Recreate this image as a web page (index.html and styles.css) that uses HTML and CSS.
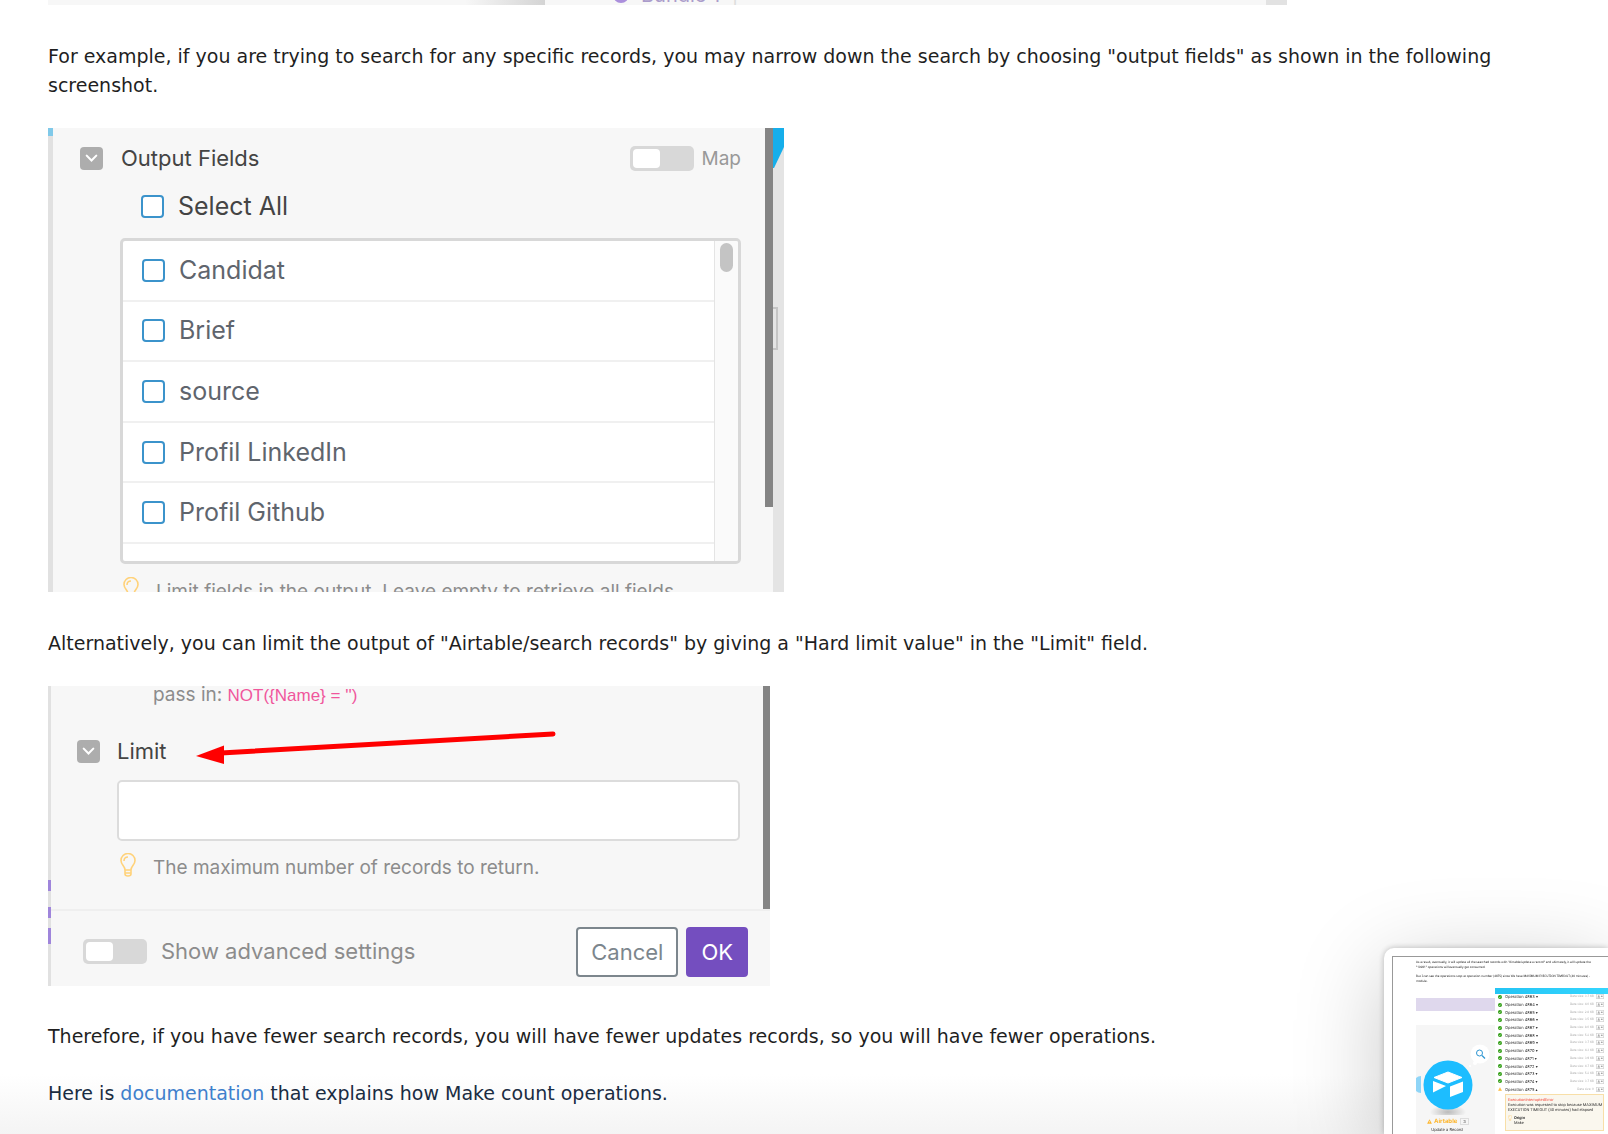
FILE: index.html
```
<!DOCTYPE html>
<html lang="en">
<head>
  <meta charset="UTF-8">
  <meta name="viewport" content="width=device-width, initial-scale=1.0">
  <title>Limiting operations</title>
  <link rel="stylesheet" href="styles.css">
</head>
<body>
  <svg class="defs" width="0" height="0" aria-hidden="true">
    <symbol id="bulb" viewBox="0 0 16 24"><path d="M5 17c0-4-4-5-4-9.500a7 7 0 0 1 14 0C15 12 11 13 11 17zM5 17v4q0 2 3 2t3-2v-4M5 20h6M4 8q0-4 4-4" fill="none" stroke="#ffd27a" stroke-width="1.600"/></symbol>
    <symbol id="chevron" viewBox="0 0 24 24"><path d="M7 9l5 5 5-5" fill="none" stroke="#fff" stroke-width="2.200" stroke-linecap="round"/></symbol>
    <symbol id="ok" viewBox="0 0 8 8"><circle cx="4" cy="4" r="4" fill="#2f9e12"/><path d="M2.200 4l1.300 1.400 2.300-2.600" fill="none" stroke="#fff" stroke-width="1.200"/></symbol>
    <symbol id="warn" viewBox="0 0 8 8"><path d="M4 .5l3.800 7H.2z" fill="#fdb62f"/><path d="M4 3v2.200M4 5.800v.8" stroke="#fff" stroke-width=".8"/></symbol>
    <symbol id="save" viewBox="0 0 16 10"><rect x=".5" y=".5" width="15" height="9" rx="1.500" fill="#fff" stroke="#aaa"/><path d="M3 7.500h5M5.500 2v4M4 4.500L5.500 6 7 4.500M10 4h3l-1.500 2z" fill="none" stroke="#777"/></symbol>
  </svg>

  <main>
    <div class="strip">
      <div class="strip-left"></div>
      <div class="strip-main"><span class="strip-dot"></span><span class="strip-text">Bundle 1: <i>|</i></span></div>
      <div class="strip-right"></div>
    </div>

    <p>For example, if you are trying to search for any specific records, you may narrow down the search by choosing "output fields" as shown in the following screenshot.</p>

    <figure class="shot shot-fields">
      <div class="edge"></div>
      <div class="panel">
        <div class="panel-head">
          <button class="chevron" aria-label="Collapse output fields"><svg><use href="#chevron"/></svg></button>
          <span class="title">Output Fields</span>
          <label class="map"><input type="checkbox" class="toggle"> Map</label>
        </div>
        <label class="check select-all"><input type="checkbox"> Select All</label>
        <div class="list">
          <div class="rows">
            <label class="check"><input type="checkbox"> Candidat</label>
            <label class="check"><input type="checkbox"> Brief</label>
            <label class="check"><input type="checkbox"> source</label>
            <label class="check"><input type="checkbox"> Profil LinkedIn</label>
            <label class="check"><input type="checkbox"> Profil Github</label>
          </div>
          <div class="list-scroll"><div class="thumb"></div></div>
        </div>
        <div class="hint"><svg><use href="#bulb"/></svg><span>Limit fields in the output. Leave empty to retrieve all fields.</span></div>
      </div>
      <div class="bar"></div>
      <div class="canvas">
        <svg class="corner" viewBox="0 0 11 40"><path d="M0 0h11v19L1 40H0z" fill="#16aeea"/></svg>
        <div class="canvas-box"></div>
      </div>
    </figure>

    <p>Alternatively, you can limit the output of "Airtable/search records" by giving a "Hard limit value" in the "Limit" field.</p>

    <figure class="shot shot-limit">
      <div class="edge"><i></i><i></i><i></i></div>
      <div class="limit">
        <div class="limit-top">
          <div class="limit-body">
            <div class="pass">pass in: <code>NOT({Name} = '')</code></div>
            <div class="limit-head">
              <button class="chevron" aria-label="Collapse limit"><svg><use href="#chevron"/></svg></button>
              <label class="title" for="limit">Limit</label>
              <svg class="arrow" viewBox="0 0 360 32"><path d="M26 17L358-2" stroke="#f00" stroke-width="5" stroke-linecap="round"/><path d="M1 20L29 9.500V28z" fill="#f00"/></svg>
            </div>
            <input type="text" id="limit" class="limit-input">
            <div class="hint"><svg><use href="#bulb"/></svg><span>The maximum number of records to return.</span></div>
          </div>
          <div class="bar"></div>
        </div>
        <div class="limit-foot">
          <label class="advanced"><input type="checkbox" class="toggle"> Show advanced settings</label>
          <button class="btn">Cancel</button>
          <button class="btn btn-ok">OK</button>
        </div>
      </div>
    </figure>

    <p>Therefore, if you have fewer search records, you will have fewer updates records, so you will have fewer operations.</p>
    <p class="docs">Here is <a href="#">documentation</a> that explains how Make count operations.</p>
  </main>

  <!-- floating preview, runs off the corner of the window -->
  <aside class="preview">
    <div class="preview-page">
      <p>As a result, eventually, it will update all the searched records with "Airtable/update a record" and ultimately, it will update the<br>"19931" operations will eventually get consumed.</p>
      <p>But I can see the operations stop at operation number (4875) since We have MAXIMUM EXECUTION TIMEOUT (40 minutes) -<br>module.</p>
      <div class="preview-cols">
        <div class="scene">
          <div class="scene-band"></div>
          <svg class="scene-art" viewBox="0 0 79 90">
            <defs><radialGradient id="shade"><stop offset="0" stop-color="#bbb"/><stop offset="1" stop-color="#f5f5f5"/></radialGradient></defs>
            <ellipse cx="32" cy="87" rx="18" ry="7" fill="url(#shade)"/>
            <path d="M0 53q2-2 5-2v17q-3 0-5-2z" fill="#8fd5f7"/>
            <circle cx="32" cy="60" r="24.500" fill="#1dbdff"/>
            <path d="M18 52.500L32 47l14 5.500L32 58z" fill="#fff" stroke="#fff" stroke-linejoin="round"/>
            <path d="M17 56l13 5-13 6.500zM34 61.500l13-5v10.500l-13 5z" fill="#fff"/>
            <circle cx="64" cy="29" r="9.500" fill="#fff"/><circle cx="59" cy="38" r="2" fill="#fff"/><circle cx="54" cy="41" r="1" fill="#fff"/>
            <circle cx="63.500" cy="28" r="3" fill="none" stroke="#2e96d2"/><path d="M66 30.500l3 3" stroke="#2e96d2" stroke-width="1.200"/>
          </svg>
          <div class="scene-name"><svg><use href="#warn"/></svg>Airtable<b>3</b></div>
          <div class="scene-sub">Update a Record</div>
        </div>
        <div class="ops">
          <div class="ops-bar"></div>
          <div class="ops-list" id="ops"></div>
          <div class="error">
            <div class="error-title">ExecutionInterruptedError</div>
            <div>Execution was requested to stop because MAXIMUM<br>EXECUTION TIMEOUT (40 minutes) had elapsed</div>
            <div class="origin"><svg><use href="#bulb"/></svg><span><b>Origin</b><br>Make</span></div>
          </div>
          <div class="ops-end"></div>
        </div>
      </div>
    </div>
  </aside>

  <script>
    const sizes = ['3.7 KB', '4.0 KB', '2.8 KB', '3.5 KB', '8.0 KB', '5.2 KB', '3.7 KB', '4.3 KB', '3.9 KB', '4.7 KB', '5.2 KB', '3.7 KB', '0'];
    document.getElementById('ops').innerHTML = sizes.map((size, i) => `
      <div class="op">
        <svg class="op-state"><use href="#${i === 12 ? 'warn' : 'ok'}"/></svg>
        <span class="op-name">Operation ${4863 + i} ${i === 12 ? '▴' : '▾'}</span>
        <span class="op-size">Data size: ${size}</span>
        <svg class="op-save" viewBox="0 0 16 10"><use href="#save"/></svg>
      </div>`).join('');
  </script>
</body>
</html>
```

FILE: styles.css
```
* { box-sizing: border-box; }
body { margin: 0; min-height: 100vh; overflow: hidden; font-family: Verdana, "DejaVu Sans", sans-serif; font-size: 19px; line-height: 29px; color: #1f1f1f; background: linear-gradient(to top, #f4f4f4, #fff 60px); }
.defs { position: absolute; }
main { padding: 0 48px; }
p { margin: 0 0 28px; }
figure { margin: 0; }
button, input { font-family: inherit; margin: 0; }
a { color: #3f80cc; text-decoration: none; }
.docs { color: #1a2c42; margin: 0; }

/* bottom edge of the previous screenshot */
.strip { display: flex; width: 1239px; max-width: 100%; height: 5px; margin-bottom: 37px; overflow: hidden; background: #f7f7f7; }
.strip-left { width: 497px; background: linear-gradient(to left, #d4d4d4, #f7f7f7 80px); }
.strip-main { display: flex; flex: 1; gap: 12px; padding-left: 68px; }
.strip-dot { width: 16px; height: 16px; margin-top: -13px; border: 4px solid #ab8fdc; border-radius: 50%; }
.strip-text { margin-top: -19px; font: 20px/29px Inter, sans-serif; color: #ab9ccb; }
.strip-text i { font-style: normal; color: #ddd; }
.strip-right { width: 21px; background: #e2e2e2; }

.shot { display: flex; max-width: 100%; overflow: hidden; background: #f7f7f7; font-family: Inter, sans-serif; font-size: 22px; color: #444; }
.shot-fields { width: 736px; height: 464px; margin-bottom: 37px; }
.shot-limit { width: 722px; height: 300px; margin-bottom: 36px; }
.edge { width: 5px; flex: none; background: #e1e1e1; }
.shot-fields .edge { border-top: 8px solid #80c9e9; }
.bar { width: 8px; flex: none; background: #848484; }
.chevron { width: 23px; height: 23px; padding: 0; border: none; border-radius: 4px; background: #adadad; }
.chevron svg { display: block; width: 23px; height: 23px; }
.toggle { appearance: none; width: 64px; height: 25px; border-radius: 5px; background: #d8d8d8; }
.toggle::before { content: ""; display: block; width: 27px; height: 19px; margin: 3px; border-radius: 4px; background: #fff; }
.hint { display: flex; gap: 17px; font-size: 19px; line-height: 24px; color: #8c8c8c; }
.hint svg { width: 16px; height: 24px; flex: none; }
.hint span { padding-top: 3px; white-space: nowrap; }

.panel { flex: 1; padding: 16px 24px 0 27px; }
.panel-head { display: flex; align-items: center; height: 29px; }
.panel-head .title { flex: 1; padding-left: 18px; }
.map { display: flex; align-items: center; gap: 8px; font-size: 19px; color: #999; }
.check { display: flex; align-items: center; gap: 14px; font-size: 25px; color: #5f656d; }
.check input { appearance: none; width: 23px; height: 23px; border: 2px solid #3b93cb; border-radius: 4px; background: #fff; }
.select-all { height: 38px; margin: 14px 0 13px 61px; color: #444; }
.list { display: flex; height: 326px; margin-left: 40px; overflow: hidden; border: 3px solid #d8d8d8; border-radius: 5px; background: #fff; }
.rows { display: grid; flex: 1; grid-template-rows: repeat(5, 1fr); height: 303px; }
.rows .check { padding-left: 19px; border-bottom: 2px solid #f0f0f0; }
.list-scroll { width: 24px; padding: 2px 5px; border-left: 1px solid #e4e4e4; background: #fafafa; }
.thumb { height: 29px; width: 13px; border-radius: 7px; background: #c4c4c4; }
.panel .hint { margin: 13px 0 0 43px; }
.shot-fields .bar { height: 379px; }
.canvas { width: 11px; background: #e4e4e4; }
.corner { display: block; width: 11px; height: 40px; }
.canvas-box { width: 5px; height: 43px; margin-top: 139px; border: 2px solid #c4c4c4; border-left: none; }

.shot-limit .edge { display: flex; flex-direction: column; gap: 16px; width: 3px; padding-top: 194px; }
.edge i { height: 11px; background: #9f85db; }
.edge i:last-child { height: 16px; margin-top: -6px; }
.limit { flex: 1; }
.limit-top { display: flex; height: 223px; }
.limit-body { flex: 1; padding: 0 23px 0 26px; }
.pass { height: 29px; margin: -6px 0 0 76px; font-size: 19px; color: #8c8c8c; }
.pass code { font: 17px "Liberation Sans", Arial, sans-serif; color: #f0569c; }
.limit-head { display: flex; align-items: center; height: 29px; margin: 28px 0 14px; }
.limit-head .title { margin: 0 28px 0 17px; }
.arrow { width: 360px; height: 32px; overflow: visible; }
.limit-input { display: block; width: calc(100% - 40px); height: 61px; margin-left: 40px; padding: 0 12px; border: 2px solid #dcdcdc; border-radius: 5px; background: #fff; font-size: 22px; }
.limit-body .hint { margin: 12px 0 0 43px; }
.shot-limit .bar { width: 7px; }
.limit-foot { display: flex; align-items: center; gap: 8px; height: 77px; padding: 6px 22px 0 32px; border-top: 2px solid #efefef; }
.advanced { display: flex; flex: 1; align-items: center; gap: 14px; color: #8c8c8c; }
.btn { height: 50px; padding: 0 13px; border: 2px solid #7c868d; border-radius: 4px; background: #fff; font-size: 22px; color: #7c868d; }
.btn-ok { border-color: #744ebf; background: #744ebf; color: #fff; }

.preview { position: fixed; right: 0; bottom: 0; width: 224px; height: 186px; padding: 8px 0 0 8px; overflow: hidden; border-radius: 10px 0 0 0; background: #fff; box-shadow: 0 0 6px rgba(0, 0, 0, 0.25), 0 20px 90px rgba(0, 0, 0, 0.22); font-size: 4px; line-height: 5px; color: #333; text-rendering: geometricPrecision; }
.preview-page { height: 178px; padding: 3px 0 0 23px; border: 1px solid #999; border-width: 1px 0 0 1px; white-space: nowrap; }
.preview p { margin: 0 0 4px; font-family: "Noto Sans", sans-serif; font-size: 3px; color: #111; }
.preview-cols { display: flex; font-family: Inter, sans-serif; }
.scene { width: 79px; flex: none; padding-top: 10px; }
.scene-band { height: 13px; margin-bottom: 14px; background: #dfd8ed; }
.scene-art { display: block; width: 79px; height: 90px; background: #f6f6f6; }
.scene-name { display: flex; align-items: center; justify-content: center; gap: 2px; height: 12px; padding-right: 15px; background: #f6f6f6; font-size: 6px; font-weight: bold; color: #fdb62f; }
.scene-name svg { width: 5px; height: 5px; }
.scene-name b { margin-left: 1px; padding: 0 2px; border: 1px solid #ddd; font-size: 4px; color: #999; }
.scene-sub { height: 10px; padding-right: 17px; background: #f6f6f6; text-align: center; }
.ops { flex: 1; min-width: 0; background: #fff; }
.ops-bar { height: 6px; margin-bottom: -1px; background: linear-gradient(to right, #24c4f4, #35d6ff); }
.ops-list { display: grid; grid-template-rows: repeat(13, 1fr); height: 100px; }
.op { display: flex; align-items: center; padding: 0 4px 0 3px; }
.op-state { width: 4px; height: 4px; margin-right: 3px; }
.op-name { flex: 1; }
.op-size { margin-right: 2px; font-size: 3px; color: #aaa; }
.op-save { width: 8px; height: 5px; }
.error { height: 37px; margin: 1px 4px 0 10px; padding: 2px; border: 1px solid #f8dfa8; background: #faf7ee; font-family: Roboto, sans-serif; }
.error-title { color: #f5493d; }
.origin { display: flex; gap: 2px; margin-top: 3px; }
.origin svg { width: 4px; height: 6px; }
.ops-end { width: 6px; height: 2px; margin: 3px 0 0 auto; background: #333; }
```
